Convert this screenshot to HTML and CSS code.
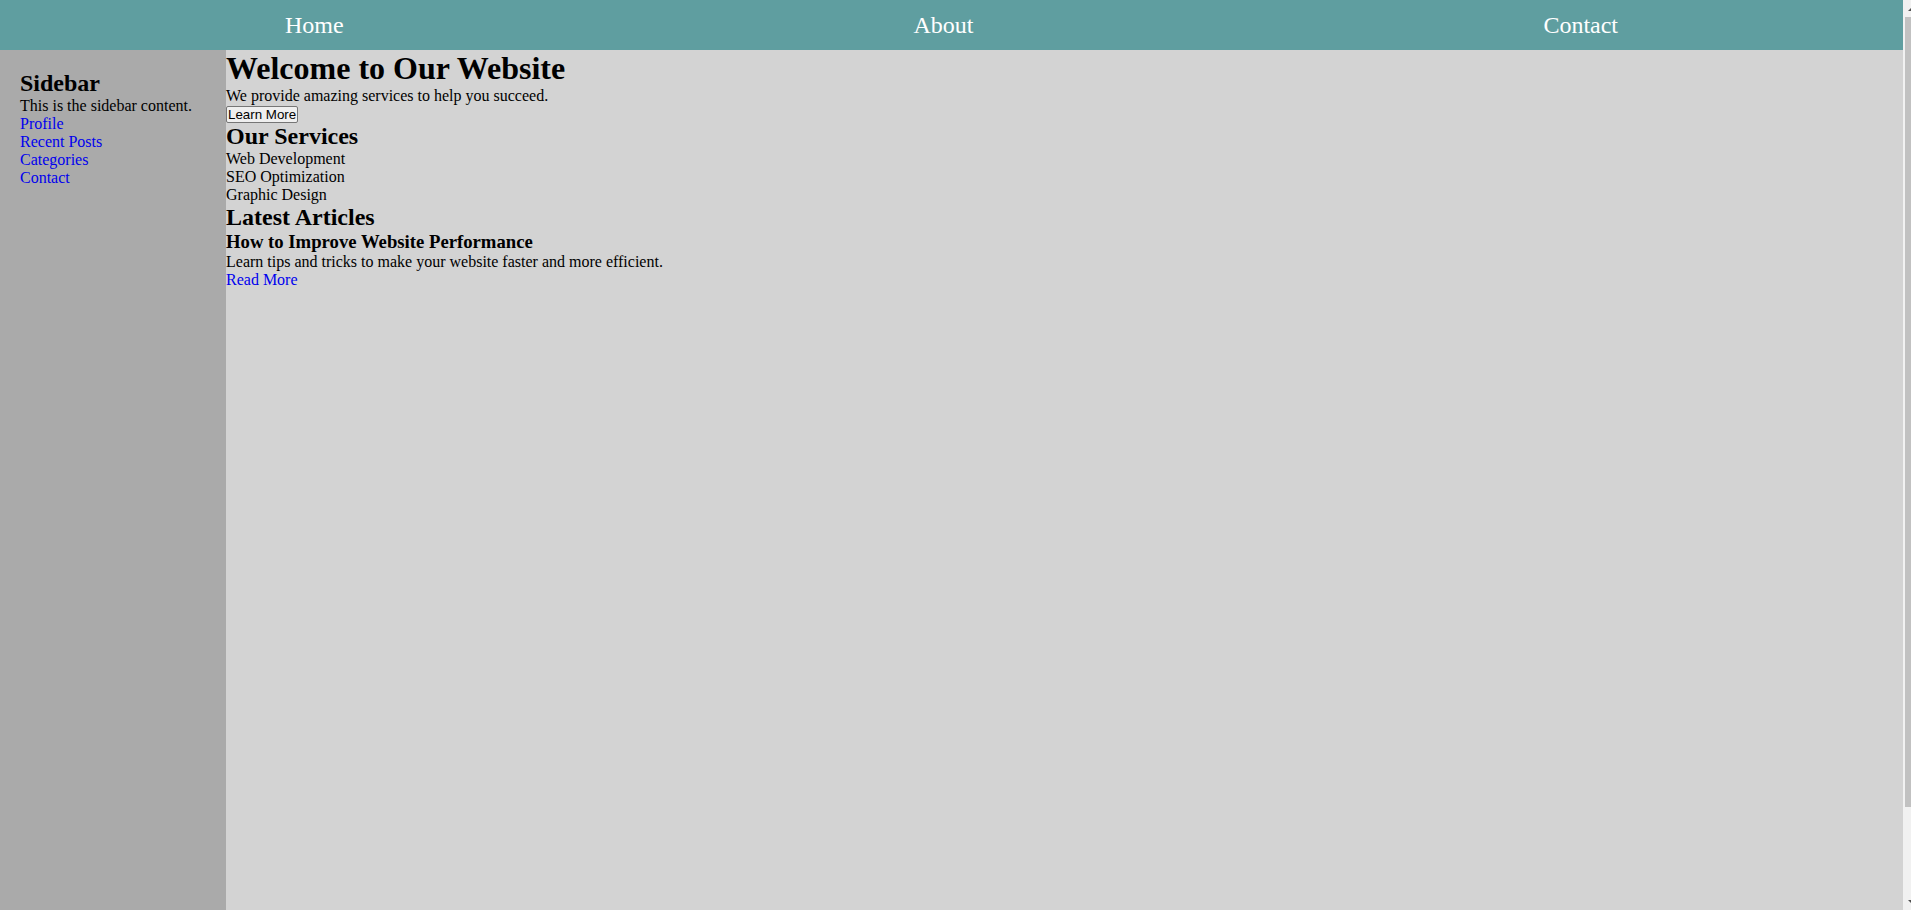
FILE: index.html
```html
<!DOCTYPE html>
<html lang="en">
<head>
<meta charset="utf-8">
<title>Welcome to Our Website</title>
<link rel="stylesheet" href="styles.css">
</head>
<body>
<header class="topbar">
  <nav class="nav">
    <a class="nav-link" href="#">Home</a>
    <a class="nav-link" href="#">About</a>
    <a class="nav-link" href="#">Contact</a>
  </nav>
</header>
<div class="layout">
  <aside class="sidebar">
    <h2 class="side-title">Sidebar</h2>
    <p class="text">This is the sidebar content.</p>
    <ul class="side-links">
      <li><a class="link" href="#">Profile</a></li>
      <li><a class="link" href="#">Recent Posts</a></li>
      <li><a class="link" href="#">Categories</a></li>
      <li><a class="link" href="#">Contact</a></li>
    </ul>
  </aside>
  <main class="main">
    <section class="hero">
      <h1 class="hero-title">Welcome to Our Website</h1>
      <p class="text">We provide amazing services to help you succeed.</p>
      <button class="btn">Learn More</button>
    </section>
    <section class="services">
      <h2 class="section-title">Our Services</h2>
      <ul class="plain-list">
        <li>Web Development</li>
        <li>SEO Optimization</li>
        <li>Graphic Design</li>
      </ul>
    </section>
    <section class="articles">
      <h2 class="section-title">Latest Articles</h2>
      <article class="article">
        <h3 class="article-title">How to Improve Website Performance</h3>
        <p class="text">Learn tips and tricks to make your website faster and more efficient.</p>
        <a class="link" href="#">Read More</a>
      </article>
    </section>
  </main>
</div>
<div class="scrollbar" aria-hidden="true">
  <span class="scroll-arrow scroll-arrow-up"></span>
  <span class="scroll-thumb"></span>
  <span class="scroll-arrow scroll-arrow-down"></span>
</div>
</body>
</html>
```
FILE: styles.css
```css
html, body {
  margin: 0;
  padding: 0;
}
body {
  font-family: "Liberation Serif", "Times New Roman", serif;
  font-size: 16px;
  color: #000;
  background: #d3d3d3;
  padding-right: 8px;
}
.topbar {
  height: 50px;
  background: #5f9ea0;
  display: flex;
  align-items: center;
}
.nav {
  flex: 1;
  display: flex;
  justify-content: space-around;
}
.nav-link {
  color: #fff;
  text-decoration: none;
  font-size: 24px;
}
.layout {
  display: flex;
}
.sidebar {
  width: 186px;
  padding: 20px;
  min-height: 100vh;
  background: #aaaaaa;
  flex-shrink: 0;
}
.main {
  flex: 1;
  background: #d3d3d3;
}
h1, h2, h3, p, ul {
  margin: 0;
  padding: 0;
}
.hero-title {
  font-size: 32px;
  font-weight: bold;
}
.side-title,
.section-title {
  font-size: 24px;
  font-weight: bold;
}
.article-title {
  font-size: 18.72px;
  font-weight: bold;
}
.text {
  font-size: 16px;
}
.side-links,
.plain-list {
  list-style: none;
}
.link {
  color: #0000ee;
  text-decoration: none;
}
.btn {
  margin: 0;
  font-family: "Liberation Sans", Arial, sans-serif;
  font-size: 13.333px;
  color: #000;
  background: #efefef;
  border: 1px solid #767676;
  border-radius: 2px;
  padding: 0 1px;
}

/* fake classic scrollbar drawn over the right edge */
.scrollbar {
  position: fixed;
  top: 0;
  right: 0;
  width: 8px;
  height: 100vh;
  background: #f1f1f1;
}
.scroll-thumb {
  position: absolute;
  top: 17px;
  left: 2px;
  width: 6px;
  height: 790px;
  background: #c1c1c1;
}
.scroll-arrow {
  position: absolute;
  right: 0;
  width: 0;
  height: 0;
  border-left: 3px solid transparent;
  border-right: 0 solid transparent;
}
.scroll-arrow-up {
  top: 8px;
  border-bottom: 3px solid #505050;
}
.scroll-arrow-down {
  bottom: 7px;
  border-top: 3px solid #505050;
}
```
